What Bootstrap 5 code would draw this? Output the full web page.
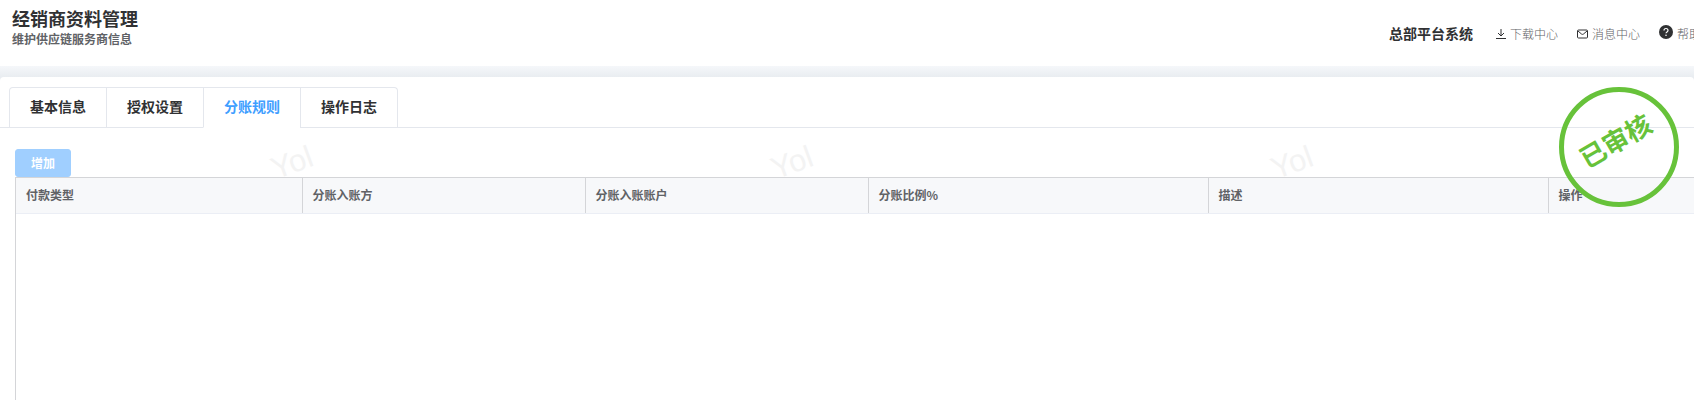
<!DOCTYPE html>
<html lang="zh-CN">
<head>
<meta charset="utf-8">
<meta name="viewport" content="width=device-width, initial-scale=1">
<title>经销商资料管理</title>
<link href="https://cdn.jsdelivr.net/npm/bootstrap@5.3.0/dist/css/bootstrap.min.css" rel="stylesheet">
<style>
body{font-family:"Noto Sans CJK SC",sans-serif;font-size:12px;line-height:20px;color:#303133;background:#fff;overflow:hidden}
.page-head{height:66px;overflow:hidden;white-space:nowrap}
.page-title{font-size:18px;line-height:22px;font-weight:700;padding-top:7px}
.page-sub{line-height:20px;font-weight:700;color:#606266}
.sys-name{font-size:14px;font-weight:700}
.quick-nav{margin-right:-7px}
.quick-nav a{color:#606266;font-weight:300;text-decoration:none;padding-top:2px}
.quick-nav{gap:19px}
.band{background:linear-gradient(#f5f7fa,#e9edf1 11px);padding-top:11px}
.panel{background:#fff;border-radius:4px 4px 0 0;min-height:calc(100vh - 77px);padding-top:10px}
.tab-bar{border-bottom:1px solid #e4e7ed;padding-left:9px}
.tab-bar .nav-tabs{border:1px solid #e4e7ed;border-bottom:0;border-radius:4px 4px 0 0}
.tab-bar .nav-link{margin:0;border:0;border-radius:0;padding:0 20px 3px;font-size:14px;line-height:36px;font-weight:700;color:#303133}
.tab-bar .nav-item + .nav-item{border-left:1px solid #e4e7ed}
.tab-bar .nav-item{margin-bottom:-1px;border-bottom:1px solid #e4e7ed}
.tab-bar .nav-item.current{border-bottom-color:#fff}
.tab-bar .nav-link.active{color:#409eff;background:none}
.content-area{padding:21px 0 0 15px;min-height:272px}
.btn-add,.btn-add:disabled{background:#a0cfff;border:1px solid #a0cfff;color:#fff;font-size:12px;line-height:18px;font-weight:700;padding:4px 15px;border-radius:3px;opacity:1}
.grid-wrap{border:1px solid #d4d5d8;border-width:1px 0 0 1px;min-height:224px;background:#fff}
.rule-table{table-layout:fixed;margin:0;width:100%}
.rule-table th{background:#f7f8fa;color:#606266;font-weight:700;font-size:12px;line-height:20px;padding:7px 10px 8px;border:0;border-right:1px solid #d4d5d8;border-bottom:1px solid #ebeef5;box-shadow:none}
.rule-table th:last-child{border-right:0}
.col-a{width:286px}.col-b{width:283px}.col-c{width:340px}
.watermark{position:absolute;top:0;left:0;right:0;height:50px;pointer-events:none}
.watermark span{position:absolute;top:15px;font-family:"Liberation Sans",sans-serif;font-size:31px;line-height:40px;color:#f3f3f3;transform:rotate(-20deg)}
.watermark span:nth-child(1){left:271px}
.watermark span:nth-child(2){left:771px}
.watermark span:nth-child(3){left:1271px}
.stamp{position:absolute;top:10px;right:15px;width:120px;height:120px;border:5px solid #67c23a;border-radius:50%;color:#67c23a;font-size:26px;line-height:30px;font-weight:700;z-index:3}
.stamp span{transform:rotate(-30deg);margin:0 8px 14px 0}
</style>
</head>
<body>
<header class="page-head d-flex">
  <div class="ps-2 ms-1">
    <h1 class="page-title mb-0 mt-0">经销商资料管理</h1>
    <p class="page-sub mb-0">维护供应链服务商信息</p>
  </div>
  <nav class="quick-nav ms-auto d-flex align-items-center">
    <span class="sys-name me-1">总部平台系统</span>
    <a href="#" class="d-flex align-items-center"><svg class="me-1" width="10" height="12" viewBox="0 0 10 12" fill="none" stroke="#303133" aria-hidden="true"><path d="M5 1v6.500M2 5l3 3 3-3M0 10.500h10"/></svg>下载中心</a>
    <a href="#" class="d-flex align-items-center"><svg class="me-1" width="11" height="12" viewBox="0 0 11 12" fill="none" stroke="#303133" aria-hidden="true"><rect x=".5" y="2" width="10" height="8" rx="1"/><path d="M1 3l3.500 3q1 .8 2 0L10 3"/></svg>消息中心</a>
    <a href="#" class="d-flex align-items-center"><svg class="me-1 mb-1" width="14" height="14" viewBox="0 0 14 14" aria-hidden="true"><circle cx="7" cy="7" r="7" fill="#303133"/><path d="M5 5.500c0-2.700 4-2.700 4 0C9 7 7 6.900 7 8.300" fill="none" stroke="#fff" stroke-width="1.200"/><circle cx="7" cy="10.200" r=".8" fill="#fff"/></svg>帮助</a>
  </nav>
</header>
<div class="band">
  <main class="panel position-relative">
    <div class="tab-bar d-flex">
      <ul class="nav nav-tabs flex-nowrap">
        <li class="nav-item"><a class="nav-link" href="#">基本信息</a></li>
        <li class="nav-item"><a class="nav-link" href="#">授权设置</a></li>
        <li class="nav-item current"><a class="nav-link active" aria-current="page" href="#">分账规则</a></li>
        <li class="nav-item"><a class="nav-link" href="#">操作日志</a></li>
      </ul>
    </div>
    <section class="content-area position-relative">
      <div class="watermark" aria-hidden="true"><span>Yol</span><span>Yol</span><span>Yol</span></div>
      <button type="button" class="btn btn-add d-block position-relative" disabled>增加</button>
      <div class="grid-wrap position-relative">
        <table class="table rule-table">
          <colgroup><col class="col-a"><col class="col-b"><col class="col-b"><col class="col-c"><col class="col-c"><col></colgroup>
          <thead><tr><th scope="col">付款类型</th><th scope="col">分账入账方</th><th scope="col">分账入账账户</th><th scope="col">分账比例%</th><th scope="col">描述</th><th scope="col">操作</th></tr></thead>
          <tbody></tbody>
        </table>
      </div>
    </section>
    <div class="stamp d-flex align-items-center justify-content-center"><span>已审核</span></div>
  </main>
</div>
<script src="https://cdn.jsdelivr.net/npm/bootstrap@5.3.0/dist/js/bootstrap.bundle.min.js"></script>
</body>
</html>
